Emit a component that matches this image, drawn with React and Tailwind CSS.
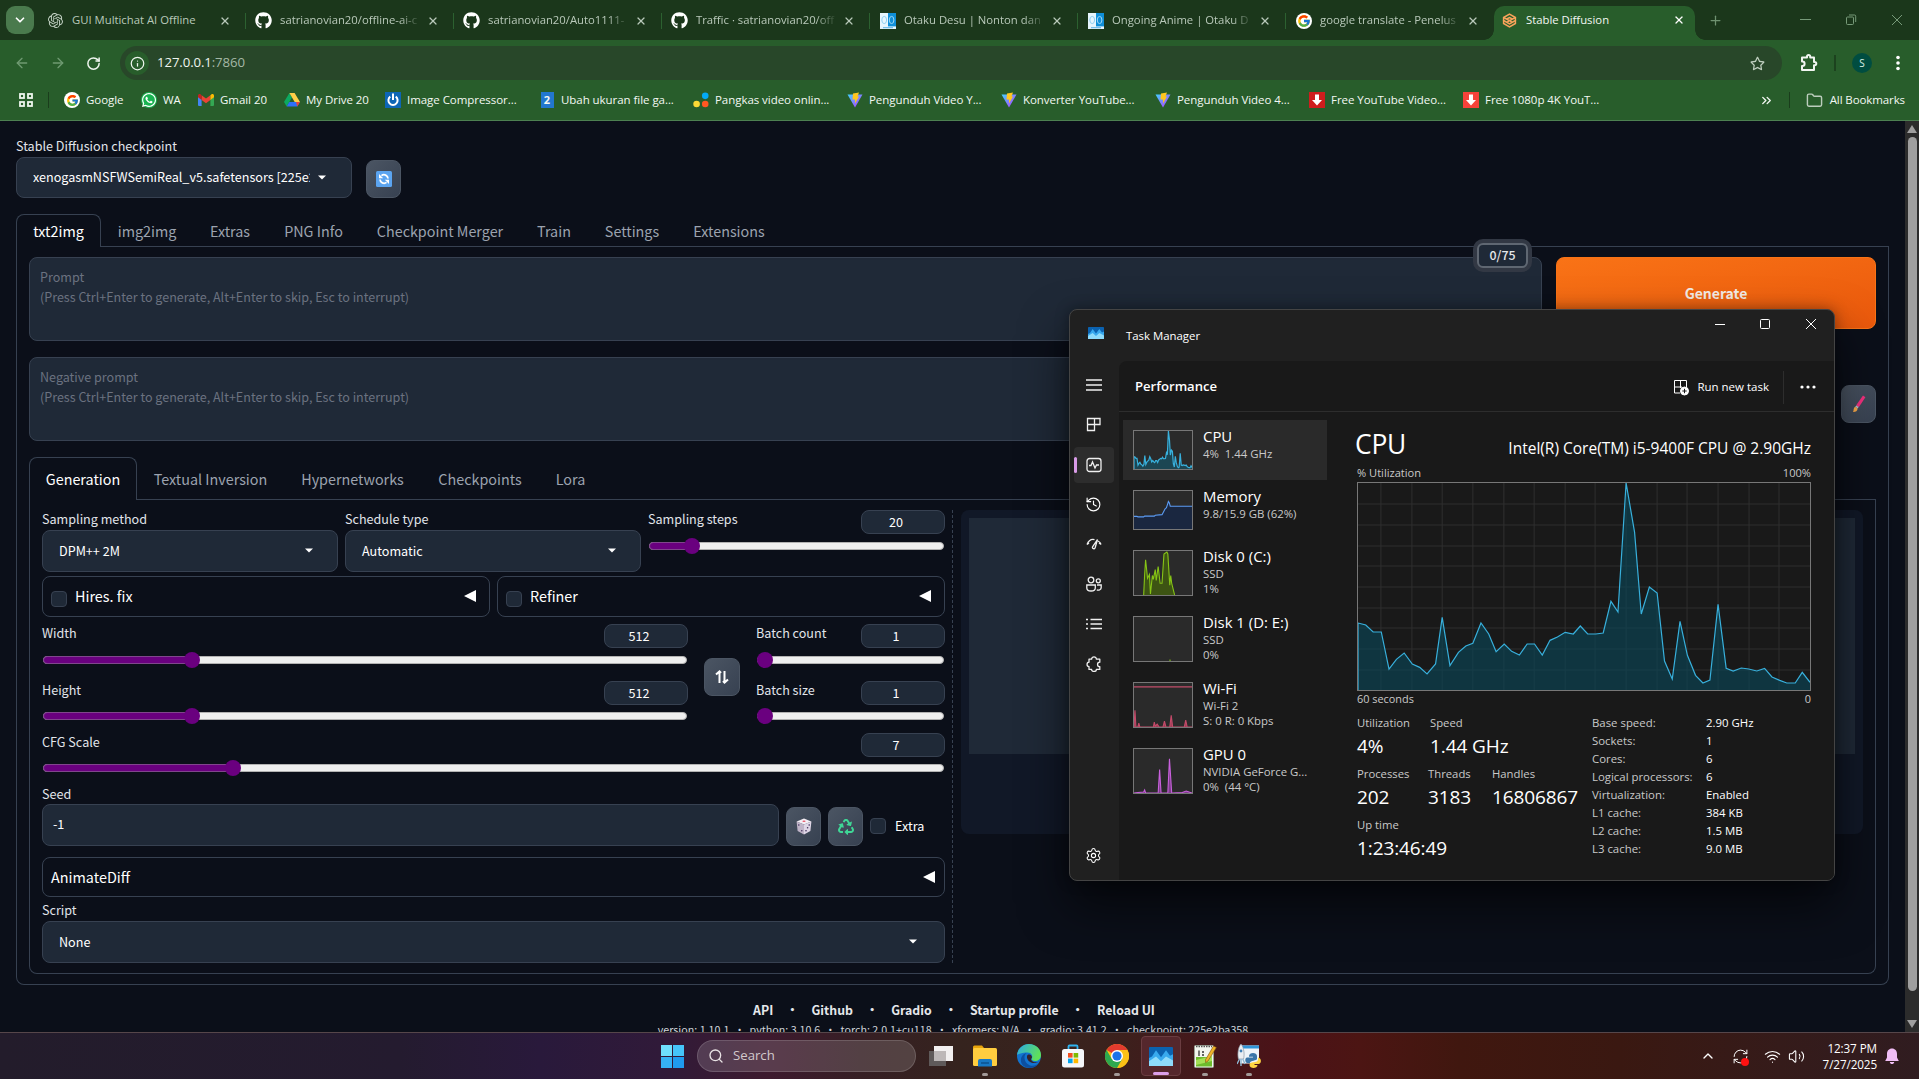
import React from "react";
import { FaGithub, FaRecycle, FaWhatsapp, FaRegStar } from "react-icons/fa";
import { FcGoogle } from "react-icons/fc";
import { SiOpenai } from "react-icons/si";
import {
  ChevronDown, ChevronUp, ChevronsRight, X, Plus, ArrowLeft, ArrowRight, RotateCw, Info,
  Folder, Search, Wifi, Volume2, Settings, History, RefreshCw,
} from "lucide-react";

/* ---------- small drawings ---------- */

const ViteBolt = () => (
  <svg width="16" height="16" viewBox="0 0 16 16">
    <defs>
      <linearGradient id="vb" x1="0" y1="0" x2="1" y2="1">
        <stop offset="0" stopColor="#41d1ff" />
        <stop offset="1" stopColor="#bd34fe" />
      </linearGradient>
    </defs>
    <path d="M0.5 2.5 L15.5 2.5 L8 15.5 Z" fill="url(#vb)" />
    <path d="M6 1.5 L12 0.5 L10.5 4.5 L12 4.5 L8 11.5 L8 7.5 L5.5 7.5 Z" fill="#ffc61f" />
  </svg>
);

const GmailIcon = () => (
  <svg width="16" height="12" viewBox="0 0 16 12">
    <path d="M0 1.5 V11 a1 1 0 0 0 1 1 H3.6 V5 Z" fill="#4285f4" />
    <path d="M16 1.5 V11 a1 1 0 0 1 -1 1 H12.4 V5 Z" fill="#34a853" />
    <path d="M3.6 1.2 L8 4.6 L12.4 1.2 V6 L8 9.3 L3.6 6 Z" fill="#ea4335" />
    <path d="M0 1.6 C0 .2 1.6 -.4 2.7 .5 L3.6 1.2 V6 L0 3.3 Z" fill="#c5221f" />
    <path d="M16 1.6 C16 .2 14.4 -.4 13.3 .5 L12.4 1.2 V6 L16 3.3 Z" fill="#fbbc04" />
  </svg>
);

const DriveIcon = () => (
  <svg width="16" height="14" viewBox="0 0 16 14">
    <path d="M5.4 0 L8 4.5 L2.7 13.6 L0 9 Z" fill="#0da960" />
    <path d="M5.4 0 H10.6 L16 9 H10.7 Z" fill="#ffcf48" />
    <path d="M5.3 9 H16 L13.3 13.6 H2.7 Z" fill="#2d6ff7" />
    <path d="M12 9 H16 L13.3 13.6 Z" fill="#ea4335" />
  </svg>
);

const OtakuIcon = () => (
  <svg width="16" height="16" viewBox="0 0 16 16">
    <rect width="8" height="16" fill="#e6f5fd" />
    <rect x="8" width="8" height="16" fill="#0f8fd8" />
    <ellipse cx="4.2" cy="7" rx="2.4" ry="3.6" fill="none" stroke="#8fd0f1" />
    <ellipse cx="11.6" cy="7" rx="2.3" ry="3.6" fill="none" stroke="#9fd8f6" />
    <rect y="13.4" width="16" height="2.6" fill="#e5f4fc" />
    <path d="M3 14.7 H13" stroke="#5ab2e4" />
  </svg>
);

const GradioIcon = () => (
  <svg width="15" height="15" viewBox="0 0 16 16" fill="none" stroke="#f9a35b" strokeWidth="1.6">
    <path d="M8 1.2 L14.3 4.8 V8 L8 11.6 L1.7 8 V4.8 Z" />
    <path d="M1.7 4.8 L8 8.2 L14.3 4.8 M1.7 8 V11.2 L8 14.8 L14.3 11.2 V8 M5 6.4 L8 4.8 L11 6.4 M5 10 L8 8.2 L11 10" />
  </svg>
);

const ExtensionIcon = () => (
  <svg width="20" height="20" viewBox="0 0 20 20" fill="none" stroke="#f1f6f1" strokeWidth="2" strokeLinejoin="round">
    <path d="M3 4.5 H8 V3.6 a1.6 1.6 0 0 1 3.2 0 V4.5 H15 V9 h.7 a1.6 1.6 0 0 1 0 3.2 H15 V17 H3 V13 h.4 a2.2 2.2 0 0 0 0 -4.4 H3 Z" />
  </svg>
);

const DownloadTile = ({ light }) => (
  <svg width="16" height="16" viewBox="0 0 16 16">
    <rect width="16" height="16" fill={light ? "#f6423a" : "#cf1d1d"} />
    <path d="M6 2.5 H10 V8 H13 L8 13.5 L3 8 H6 Z" fill="#fff" />
  </svg>
);

const PowerTile = () => (
  <svg width="16" height="16" viewBox="0 0 16 16">
    <rect width="16" height="16" fill="#0d66b5" />
    <path d="M5.3 4.6 a4.6 4.6 0 1 0 5.4 0" fill="none" stroke="#fff" strokeWidth="2" />
    <path d="M8 1.5 V8" stroke="#fff" strokeWidth="2" />
  </svg>
);

const DotsIcon = () => (
  <svg width="17" height="16" viewBox="0 0 17 16">
    <circle cx="13" cy="3.6" r="3.5" fill="#03a9f4" />
    <circle cx="3.8" cy="12.3" r="3.5" fill="#fdd835" />
    <circle cx="13" cy="12.3" r="3.5" fill="#ff5722" />
  </svg>
);

const RefreshEmoji = () => (
  <svg width="16" height="16" viewBox="0 0 16 16">
    <rect width="16" height="16" rx="1.5" fill="#5ba4f0" />
    <path d="M4 8.5 a4 4 0 0 0 6.5 2.9 M12 7.5 a4 4 0 0 0 -6.5 -2.9" fill="none" stroke="#fff" strokeWidth="1.8" />
    <path d="M3 3 V7.3 H7.2 Z M13 13 V8.7 H8.8 Z" fill="#fff" />
  </svg>
);

const DiceEmoji = () => (
  <svg width="16" height="17" viewBox="0 0 16 17">
    <path d="M8 .5 L15.4 3.4 L8 6.4 L.6 3.4 Z" fill="#f4eef5" />
    <path d="M.6 3.4 L8 6.4 V16.5 L1.6 13 Z" fill="#c0b4c8" />
    <path d="M15.4 3.4 L8 6.4 V16.5 L14.4 13 Z" fill="#dfd6e6" />
    <ellipse cx="8" cy="3.2" rx="1.6" ry=".8" fill="#e8566a" />
    <g fill="#40305a">
      <circle cx="2.8" cy="7" r=".8" /><circle cx="5.8" cy="12.8" r=".8" />
      <circle cx="13.2" cy="7" r=".8" /><circle cx="11.6" cy="9.8" r=".8" /><circle cx="10" cy="12.8" r=".8" />
    </g>
  </svg>
);

const BrushEmoji = () => (
  <svg width="14" height="18" viewBox="0 0 14 18">
    <path d="M11 .6 L13.4 2.2 L6.8 12.2 L4.2 10.3 Z" fill="#f5317f" />
    <path d="M4.4 10.4 L6.6 12 L5.6 13.4 L3.2 11.8 Z" fill="#b9c3cf" />
    <path d="M3.2 11.8 L5.6 13.4 C5.6 15.8 3.4 17.2 1 17 C2 16 1 13.2 3.2 11.8 Z" fill="#fbab4a" />
  </svg>
);

const TaskManagerIcon = ({ className }) => (
  <svg className={className} viewBox="0 0 24 24" preserveAspectRatio="none">
    <rect width="24" height="24" rx="1" fill="#0b62b0" />
    <path d="M0 14 L3 12 L7 4 L12 13 L17 4 L21 11 L24 9 V24 H0 Z" fill="#38a9ee" />
    <path d="M0 18 L7 12 L12 18 L17 12 L24 17 V24 H0 Z" fill="#8edbfb" />
  </svg>
);

/* ---------- browser chrome ---------- */

const browserTabs = [
  { title: "GUI Multichat AI Offline", icon: <SiOpenai size={15} color="#c4d2c5" /> },
  { title: "satrianovian20/offline-ai-c", icon: <FaGithub size={17} color="#fff" /> },
  { title: "satrianovian20/Auto1111-", icon: <FaGithub size={17} color="#fff" /> },
  { title: "Traffic · satrianovian20/off", icon: <FaGithub size={17} color="#fff" /> },
  { title: "Otaku Desu | Nonton dan", icon: <OtakuIcon /> },
  { title: "Ongoing Anime | Otaku D", icon: <OtakuIcon /> },
  { title: "google translate - Penelus", icon: <span className="flex h-4 w-4 items-center justify-center rounded-full bg-white"><FcGoogle size={14} /></span> },
];

const TabStrip = () => (
  <div className="flex h-10 bg-[#1b371b] pl-[6px] text-[11.3px] text-[#b9c9ba]">
    <div className="mt-[6px] flex h-7 w-7 items-center justify-center rounded-[9px] bg-[#4a7a4d]">
      <ChevronDown size={14} strokeWidth={3} color="#fff" />
    </div>
    <div className="ml-[4px] flex">
      {browserTabs.map((t, i) => (
        <div key={i} className="flex h-10 w-[208px] items-center pt-px">
          <span className="ml-[9px] flex w-[17px] justify-center">{t.icon}</span>
          <span className={i === 0 ? "ml-[8px] w-[141px] whitespace-nowrap" : "ml-[8px] w-[141px] whitespace-nowrap [mask-image:linear-gradient(to_right,black_120px,transparent_141px)]"}>{t.title}</span>
          <X size={12} strokeWidth={2.4} className="ml-[6px]" />
          <span className={i < 6 ? "ml-[14px] h-4 w-px bg-[#2c6130]" : "ml-[14px] h-4 w-px"} />
        </div>
      ))}
    </div>
    <div className="relative mt-[6px] flex h-[34px] w-[201px] items-center rounded-t-[10px] bg-[#285d2b] text-[#f2f7f2]">
      <span className="absolute bottom-0 -left-[10px] h-[10px] w-[10px] bg-[radial-gradient(circle_at_top_left,transparent_9.5px,#285d2b_10px)]" />
      <span className="absolute -right-[10px] bottom-0 h-[10px] w-[10px] bg-[radial-gradient(circle_at_top_right,transparent_9.5px,#285d2b_10px)]" />
      <span className="-mt-[5px] ml-[8px]"><GradioIcon /></span>
      <span className="-mt-[5px] ml-[9px] w-[147px]">Stable Diffusion</span>
      <X size={12} strokeWidth={2.6} className="-mt-[6px]" color="#fff" />
    </div>
    <Plus size={15} className="mt-[13px] ml-[13px]" color="#6f9271" />
    <div className="mr-[5px] ml-auto flex items-center text-[#779a79]">
      <svg width="114" height="12" viewBox="0 0 114 12" fill="none" stroke="currentColor">
        <path d="M0 5.5 H11" />
        <rect x="46.5" y="3" width="7" height="7.5" rx="1" />
        <path d="M49 1 H54.5 a1.2 1.2 0 0 1 1.2 1.2 V8" />
        <path d="M92 1 L102 11 M102 1 L92 11" />
      </svg>
    </div>
  </div>
);

const Toolbar = () => (
  <div className="flex h-[46px] items-center bg-[#285d2b] text-[#eef5ee]">
    <ArrowLeft size={16} className="ml-[14px]" color="#6f9a72" />
    <ArrowRight size={16} className="ml-[20px]" color="#6f9a72" />
    <RotateCw size={15} strokeWidth={2.4} className="ml-[20px]" />
    <div className="ml-[19px] flex h-[34px] w-[1662px] items-center rounded-full bg-[#284729]">
      <span className="ml-[5px] flex h-6 w-6 items-center justify-center rounded-full bg-[#285d2b]"><Info size={15} /></span>
      <span className="ml-[8px] text-[13.2px] tracking-[-0.1px]">127.0.0.1<span className="text-[#a5b8a6]">:7860</span></span>
      <FaRegStar size={15} className="mr-[17px] ml-auto" color="#bfcfbf" />
    </div>
    <span className="ml-[17px]"><ExtensionIcon /></span>
    <span className="ml-[15px] h-4 w-[2px] bg-[#1c421e]" />
    <span className="ml-[16px] flex h-5 w-5 items-center justify-center rounded-full bg-[#004d40] text-[10px] text-[#d8f0e6]">S</span>
    <svg width="4" height="16" className="ml-[24px]" fill="#fff"><circle cx="2" cy="2.5" r="1.8" /><circle cx="2" cy="8" r="1.8" /><circle cx="2" cy="13.5" r="1.8" /></svg>
  </div>
);

const bookmarks = [
  { w: "w-[77px]", label: "Google", icon: <span className="flex h-4 w-4 items-center justify-center rounded-full bg-white"><FcGoogle size={13} /></span> },
  { w: "w-[57px]", label: "WA", icon: <span className="flex h-4 w-4 items-center justify-center rounded-full bg-[#19b351]"><FaWhatsapp size={16} color="#fff" /></span> },
  { w: "w-[86px]", label: "Gmail 20", icon: <GmailIcon /> },
  { w: "w-[101px]", label: "My Drive 20", icon: <DriveIcon /> },
  { w: "w-[154px]", label: "Image Compressor...", icon: <PowerTile /> },
  { w: "w-[154px]", label: "Ubah ukuran file ga...", icon: <span className="flex h-4 w-[13px] items-center justify-center bg-[#2277cf] text-[11px] font-bold">2</span> },
  { w: "w-[154px]", label: "Pangkas video onlin...", icon: <DotsIcon /> },
  { w: "w-[154px]", label: "Pengunduh Video Y...", icon: <ViteBolt /> },
  { w: "w-[154px]", label: "Konverter YouTube...", icon: <ViteBolt /> },
  { w: "w-[154px]", label: "Pengunduh Video 4...", icon: <ViteBolt /> },
  { w: "w-[154px]", label: "Free YouTube Video...", icon: <DownloadTile /> },
  { w: "w-[154px]", label: "Free 1080p 4K YouT...", icon: <DownloadTile light /> },
];

const Bookmarks = () => (
  <div className="flex h-[35px] items-center border-b border-[#4d8051] bg-[#285d2b] pb-[6px] text-[11.5px] text-[#f3f8f3]">
    <svg width="14" height="14" className="ml-[19px]" fill="none" stroke="#eef5ee" strokeWidth="1.8">
      <rect x="1" y="1" width="4" height="4" /><rect x="9" y="1" width="4" height="4" />
      <rect x="1" y="9" width="4" height="4" /><rect x="9" y="9" width="4" height="4" />
    </svg>
    <span className="ml-[15px] h-4 w-px bg-[#1a3d1c]" />
    <div className="ml-[15px] flex">
      {bookmarks.map((b) => (
        <div key={b.label} className={"flex shrink-0 items-center " + b.w}>
          <span className="flex w-4 shrink-0 justify-center">{b.icon}</span>
          <span className="ml-[6px] whitespace-nowrap tracking-[-0.05px]">{b.label}</span>
        </div>
      ))}
    </div>
    <div className="mr-[14px] ml-auto flex items-center">
      <ChevronsRight size={15} strokeWidth={2.2} />
      <span className="ml-[15px] h-4 w-px bg-[#1a3d1c]" />
      <Folder size={17} className="ml-[16px]" color="#bccdbd" />
      <span className="ml-[7px] tracking-[-0.1px]">All Bookmarks</span>
    </div>
  </div>
);

/* ---------- web UI ---------- */

const Label = ({ children }) => (
  <div className="text-[12.6px] leading-[18px] whitespace-nowrap text-[#e1e4ea]">{children}</div>
);

const Caret = () => (
  <svg width="8" height="5" viewBox="0 0 8 5"><path d="M0 .5 H8 L4 4.5 Z" fill="#fff" /></svg>
);

const Select = ({ value, className }) => (
  <div className={"flex items-center justify-between rounded-lg border border-[#374151] bg-[#1f2937] pb-px pl-4 " + className}>
    <span className="text-[12.6px] leading-5 text-white">{value}</span>
    <Caret />
  </div>
);

const NumberBox = ({ value }) => (
  <div className="flex h-6 w-[84px] items-center justify-center rounded-lg border border-[#374151] bg-[#1f2937] pr-[14px] text-[12.6px] leading-5 text-white">{value}</div>
);

const Slider = ({ fill, knob }) => (
  <div className="relative h-2 rounded-full border border-[#b2b2b2] bg-[#efefef]">
    <div className={"-mt-px -ml-px h-2 rounded-full border border-[#80468c] bg-[#6a007f] " + fill} />
    <span className={"absolute -top-[5px] h-4 w-4 rounded-full bg-[#6a007f] " + knob} />
  </div>
);

const SliderField = ({ label, value, fill, knob, gap }) => (
  <div>
    <div className="flex h-6 justify-between">
      <Label>{label}</Label>
      <NumberBox value={value} />
    </div>
    <div className={"px-px " + gap}><Slider fill={fill} knob={knob} /></div>
  </div>
);

const CheckBox = () => <span className="h-4 w-4 rounded border border-[#374151] bg-[#1f2937]" />;

const Triangle = () => (
  <svg width="12" height="12" viewBox="0 0 12 12"><path d="M0 6 L12 0 V12 Z" fill="#fff" /></svg>
);

const Accordion = ({ label, check }) => (
  <div className={check ? "flex h-[41px] w-[448px] items-center rounded-lg border border-[#374151] px-2 pb-px" : "flex h-10 items-center rounded-lg border border-[#374151] px-2"}>
    {check && <span className="mt-[5px] mr-2 flex"><CheckBox /></span>}
    <span className="text-[14.4px] leading-6 text-white">{label}</span>
    <span className={check ? "mr-[5px] ml-auto" : "mr-px ml-auto"}><Triangle /></span>
  </div>
);

const ToolButton = ({ children, className }) => (
  <div className={"flex items-center justify-center rounded-lg border border-[#4b5563] bg-linear-to-br from-[#4b5563] to-[#374151] " + className}>{children}</div>
);

const Tabs = ({ items, className, first }) => (
  <div className={"flex text-[14.35px] text-[#9ca3af] " + className}>
    <div className={"flex items-center justify-center rounded-t-lg border border-b-0 border-[#374151] text-white " + first}>{items[0].label}</div>
    <div className="flex flex-1 border-b border-[#374151] pt-[2px]">
      {items.slice(1).map((t) => (
        <div key={t.label} className={"flex items-center justify-center whitespace-nowrap " + t.w}>{t.label}</div>
      ))}
    </div>
  </div>
);

const mainTabs = [
  { label: "txt2img" }, { label: "img2img", w: "w-[92px]" }, { label: "Extras", w: "w-[74px]" },
  { label: "PNG Info", w: "w-[93px]" }, { label: "Checkpoint Merger", w: "w-[160px]" }, { label: "Train", w: "w-[68px]" },
  { label: "Settings", w: "w-[88px]" }, { label: "Extensions", w: "w-[106px]" },
];
const subTabs = [
  { label: "Generation" }, { label: "Textual Inversion", w: "w-[147px]" }, { label: "Hypernetworks", w: "w-[137px]" },
  { label: "Checkpoints", w: "w-[118px]" }, { label: "Lora", w: "w-[63px]" },
];

const PromptBox = ({ title }) => (
  <div className="h-[84px] w-[1513px] rounded-lg border border-[#374151] bg-[#1f2937] px-[10px] pt-[9px] text-[12.55px] leading-5 text-[#6b7280]">
    {title}<br />(Press Ctrl+Enter to generate, Alt+Enter to skip, Esc to interrupt)
  </div>
);

const Prompts = () => (
  <div className="flex">
    <div className="relative flex flex-col gap-4">
      <PromptBox title="Prompt" />
      <PromptBox title="Negative prompt" />
      <div className="absolute -top-[18px] right-[10px] rounded-[10px] bg-[#323844] p-1">
        <div className="flex h-[25px] w-[51px] items-center justify-center rounded-md border-2 border-[#5f6772] bg-[#1f2937] text-[12.4px] font-medium text-[#e5e7eb]">0/75</div>
      </div>
    </div>
    <div className="ml-[14px] flex w-[320px] flex-col items-end">
      <div className="flex h-[72px] w-full items-center justify-center rounded-lg border border-[#f97316] bg-linear-to-br from-[#f97316] to-[#ea580c] text-[14px] font-bold text-[#f3ece6]">Generate</div>
      <ToolButton className="mt-[56px] h-[38px] w-[35px]"><BrushEmoji /></ToolButton>
    </div>
  </div>
);

const Generation = () => (
  <div className="w-[903px]">
    <div className="flex h-[62px] gap-[7px]">
      <div className="w-[296px]"><Label>Sampling method</Label><Select value="DPM++ 2M" className="mt-[2px] h-[42px] pr-6" /></div>
      <div className="w-[296px]"><Label>Schedule type</Label><Select value="Automatic" className="mt-[2px] h-[42px] pr-6" /></div>
      <div className="w-[297px]"><SliderField label="Sampling steps" value="20" gap="mt-2" fill="w-[44px]" knob="left-[34px]" /></div>
    </div>
    <div className="mt-1 flex gap-[7px]">
      <Accordion label="Hires. fix" check />
      <Accordion label="Refiner" check />
    </div>
    <div className="mt-[7px] flex">
      <div className="flex w-[646px] flex-col gap-[17px]">
        <SliderField label="Width" value="512" gap="mt-2" fill="w-[150px]" knob="left-[140px]" />
        <SliderField label="Height" value="512" gap="mt-[7px]" fill="w-[150px]" knob="left-[140px]" />
      </div>
      <ToolButton className="mt-[34px] ml-[16px] h-[38px] w-9">
        <svg width="14" height="14" viewBox="0 0 14 14" fill="none" stroke="#fff" strokeWidth="2"><path d="M4.5 13 V2 M1 4.6 L4.5 1.4 L6 3 M9.5 1 V12 M13 9.4 L9.5 12.6 L8 11" /></svg>
      </ToolButton>
      <div className="ml-[16px] flex w-[189px] flex-col gap-[17px]">
        <SliderField label="Batch count" value="1" gap="mt-2" fill="w-[8px]" knob="-left-px" />
        <SliderField label="Batch size" value="1" gap="mt-[7px]" fill="w-[8px]" knob="-left-px" />
      </div>
    </div>
    <div className="mt-[13px]"><SliderField label="CFG Scale" value="7" gap="mt-[7px]" fill="w-[190px]" knob="left-[181px]" /></div>
    <div className="mt-[13px] pb-px"><Label>Seed</Label></div>
    <div className="flex h-[42px] items-end">
      <div className="flex h-[42px] w-[737px] items-center rounded-lg border border-[#374151] bg-[#1f2937] px-[10px] pb-[2px] text-[12.6px] leading-5 text-white">-1</div>
      <ToolButton className="ml-[7px] h-[39px] w-[35px]"><DiceEmoji /></ToolButton>
      <ToolButton className="ml-[7px] h-[39px] w-[35px]"><FaRecycle size={16} color="#3fd796" /></ToolButton>
      <span className="mb-3 ml-[7px] flex"><CheckBox /></span>
      <span className="mb-[10px] ml-[9px] text-[12.6px] leading-5 text-white">Extra</span>
    </div>
    <div className="mt-[11px]"><Accordion label="AnimateDiff" /></div>
    <div className="mt-[4px]"><Label>Script</Label></div>
    <Select value="None" className="mt-[2px] h-[42px] pr-[27px]" />
  </div>
);

const footerLinks = ["API", "Github", "Gradio", "Startup profile", "Reload UI"];

const WebUI = () => (
  <div className="flex h-[911px] bg-[#0b0f19] font-['Noto_Sans_CJK_SC','Noto_Sans',sans-serif]">
    <div className="w-[1905px] overflow-hidden pt-[15px] pr-[15px] pl-4">
      <div className="h-5 pt-px"><Label>Stable Diffusion checkpoint</Label></div>
      <div className="mt-px flex items-end">
        <div className="flex h-[41px] w-[336px] items-center rounded-lg border border-[#374151] bg-[#1f2937] pb-px pl-4">
          <span className="w-[277px] overflow-hidden text-[12.6px] leading-5 whitespace-nowrap text-white">xenogasmNSFWSemiReal_v5.safetensors [225e2</span>
          <span className="ml-[8px]"><Caret /></span>
        </div>
        <ToolButton className="ml-[14px] h-[38px] w-[35px]"><RefreshEmoji /></ToolButton>
      </div>
      <Tabs items={mainTabs} className="mt-4 h-[33px] w-[1873px]" first="w-[85px]" />
      <div className="h-[738px] w-[1873px] rounded-b-lg border border-t-0 border-[#374151] pt-[10px] pl-3">
        <Prompts />
        <Tabs items={subTabs} className="mt-4 h-[43px] w-[1847px]" first="w-[108px]" />
        <div className="flex h-[474px] w-[1847px] rounded-b-lg border border-t-0 border-[#374151] pt-[10px] pl-3">
          <Generation />
          <div className="ml-[7px] h-[453px] border-l border-dashed border-[#374151]" />
          <div className="ml-2 h-[324px] w-[902px] rounded-lg bg-[#111827] p-2">
            <div className="h-[236px] bg-[#1f2937]" />
          </div>
        </div>
      </div>
      <div className="mt-[15px] flex h-5 items-center justify-center pl-[2px] text-[12.3px] font-bold text-[#e5e7eb]">
        {footerLinks.map((l, i) => (
          <React.Fragment key={l}>
            {i > 0 && <span className="mx-[13px]">•</span>}
            <span>{l}</span>
          </React.Fragment>
        ))}
      </div>
      <div className="flex h-5 items-center justify-center text-[10.7px] whitespace-pre text-[#d1d5db]">
        version: <u>1.10.1</u>  •  python: 3.10.6  •  torch: 2.0.1+cu118  •  xformers: N/A  •  gradio: 3.41.2  •  checkpoint: <u>225e2ba358</u>
      </div>
    </div>
    <div className="flex w-[14px] flex-col items-center justify-between bg-[#2c2c2c] py-[4px]">
      <svg width="10" height="8" viewBox="0 0 10 8"><path d="M5 0 L10 8 H0 Z" fill="#9f9f9f" /></svg>
      <div className="mb-[25px] h-[854px] w-[9px] rounded-full bg-[#9f9f9f]" />
      <svg width="10" height="8" viewBox="0 0 10 8"><path d="M5 8 L10 0 H0 Z" fill="#9f9f9f" /></svg>
    </div>
  </div>
);

/* ---------- task manager ---------- */

const cpuLine = "0,420 21,426 41,447 63,447 84,558 104,529 125,510 147,543 167,553 187,573 210,543 228,403 249,548 272,508 292,489 311,481 333,420 354,453 374,506 396,483 416,505 437,516 458,483 478,483 499,516 520,472 540,462 561,448 583,453 602,429 622,453 644,453 664,450 685,355 704,387 726,0 749,148 767,393 789,312 810,330 830,534 851,588 872,415 892,517 914,577 934,600 953,591 975,364 997,556 1016,564 1038,555 1058,558 1080,564 1101,556 1121,582 1142,592 1161,600 1184,600 1203,568 1224,598";
const gridX = [62, 146, 228, 311, 395, 477, 561, 642, 726, 810, 891, 975, 1059, 1140];
const gridY = [63, 126, 189, 249, 312, 375, 435, 498, 561];

const CpuPlot = ({ grid }) => (
  <svg className="block h-full w-full" viewBox="0 0 1224 621" preserveAspectRatio="none">
    {grid && (
      <g stroke="#2f2f2f">
        {gridX.map((x) => <path key={x} d={`M${x} 0 V621`} vectorEffect="non-scaling-stroke" />)}
        {gridY.map((y) => <path key={y} d={`M0 ${y} H1224`} vectorEffect="non-scaling-stroke" />)}
      </g>
    )}
    <polygon points={`0,621 ${cpuLine} 1224,621`} fill={grid ? "rgba(8,72,90,.6)" : "rgba(20,90,112,.6)"} />
    <polyline points={`0,621 ${cpuLine}`} fill="none" stroke="#38b0dc" strokeWidth="1.2" vectorEffect="non-scaling-stroke" />
  </svg>
);

const MiniPlot = ({ line, stroke, fill, children }) => (
  <svg className="block h-full w-full" viewBox="0 0 60 45" preserveAspectRatio="none">
    {line && <polygon points={`0,46 ${line} 60,46`} fill={fill} />}
    {line && <polyline points={line} fill="none" stroke={stroke} strokeWidth="1.1" vectorEffect="non-scaling-stroke" />}
    {children}
  </svg>
);

const resources = [
  { name: "CPU", lines: ["4%  1.44 GHz"], box: "h-10", item: "h-[60px] bg-[#2a2a2a]", plot: <CpuPlot /> },
  { name: "Memory", lines: ["9.8/15.9 GB (62%)"], box: "h-10", item: "h-[60px]",
    plot: <MiniPlot line="0,30 3,30 4,30.6 10,30.6 11,29.8 21,29.8 22,28.8 29,28 32.5,20.5 33.5,20 35.6,12.5 36.5,14 37.5,18 60,18" stroke="#5b9cf5" fill="#1a2740" /> },
  { name: "Disk 0 (C:)", lines: ["SSD", "1%"], box: "h-[46px]", item: "h-[66px]",
    plot: <MiniPlot line="10,45 11,24 12,9 14,28 16,24 17,44 19,25 20,29 22,19 23,30 25,16 27,33 29,33 31,3 34,1 35,3 37,35 38,25 39,33 42,45" stroke="#86c416" fill="#3d5413" /> },
  { name: "Disk 1 (D: E:)", lines: ["SSD", "0%"], box: "h-[46px]", item: "h-[66px]",
    plot: <MiniPlot><rect x="36.5" y="43.5" width="1.5" height="1.5" fill="#6f9f1c" /></MiniPlot> },
  { name: "Wi-Fi", lines: ["Wi-Fi 2", "S: 0 R: 0 Kbps"], box: "h-[46px]", item: "h-[66px]",
    plot: <MiniPlot line="0,45 1,28 2,45 4,45 5,41 6,45 20,45 21,40 22,44 24,42 26,45 30,45 31.5,39 33,45 37,45 38.5,33 40,45 52,45 53.5,38 55,45 60,45" stroke="#c44a69" fill="#a03f58"><path d="M0 4 H60" stroke="#f0587c" /></MiniPlot> },
  { name: "GPU 0", lines: ["NVIDIA GeForce G...", "0%  (44 °C)"], box: "h-[46px]", item: "h-[66px]",
    plot: <MiniPlot line="0,45 4,44.5 10,44 11,42 12,45 25,45 26.5,21 28,45 35,45 36.7,10 39,45 50,44.5 54,43 60,45" stroke="#c860dc" fill="#7d3f8a" /> },
];

const navStroke = { fill: "none", stroke: "#f0f0f0", strokeWidth: 1.3 };
const NavIcon = ({ children }) => <svg width="16" height="16" viewBox="0 0 16 16" {...navStroke}>{children}</svg>;

const Stat = ({ label, value, className }) => (
  <div className={className}>
    <div className="text-[11.3px] leading-[18px] text-[#c9c9c9]">{label}</div>
    <div className="text-[19px] leading-7 tracking-[-0.1px] whitespace-nowrap text-white">{value}</div>
  </div>
);

const specs = [
  ["Base speed:", "2.90 GHz"], ["Sockets:", "1"], ["Cores:", "6"], ["Logical processors:", "6"],
  ["Virtualization:", "Enabled"], ["L1 cache:", "384 KB"], ["L2 cache:", "1.5 MB"], ["L3 cache:", "9.0 MB"],
];

const TaskManager = () => (
  <div className="absolute top-[309px] left-[1069px] flex h-[572px] w-[766px] flex-col overflow-hidden rounded-lg border border-[#444] bg-[#202020] text-white shadow-[0_24px_48px_rgba(0,0,0,0.6),0_0_14px_rgba(0,0,0,0.35)]">
    <div className="flex h-[51px]">
      <TaskManagerIcon className="mt-[17px] ml-[18px] h-3 w-4" />
      <span className="mt-[17px] ml-[22px] text-[11.4px] leading-[18px]">Task Manager</span>
      <svg width="102" height="12" viewBox="0 0 102 12" className="mt-[8px] mr-[17px] ml-auto" fill="none" stroke="#fff">
        <path d="M0 6.5 H10" /><rect x="45.5" y="1.5" width="9" height="9" rx="1" /><path d="M91 1 L101 11 M101 1 L91 11" />
      </svg>
    </div>
    <div className="flex flex-1">
      <div className="flex w-[49px] flex-col items-center pr-[2px]">
        <div className="mt-[6px] flex h-9 items-center"><NavIcon><path d="M0 3 H16 M0 8 H16 M0 13 H16" /></NavIcon></div>
        <div className="mt-[3px] flex h-9 items-center"><NavIcon><path d="M1.5 2.5 H14 V8.5 H1.5 Z M1.5 8.5 V14.5 H8.5 V2.5" /></NavIcon></div>
        <div className="mt-[5px] flex h-9 w-10 items-center rounded bg-[#2d2d2d]">
          <span className="h-4 w-[3px] rounded-full bg-[#d99be8]" />
          <span className="ml-[9px]"><NavIcon><rect x="1" y="1.5" width="14" height="13" rx="2.5" /><path d="M3 8.5 H5 L6.5 5 L9 11 L10.5 8 H13" /></NavIcon></span>
        </div>
        <div className="mt-[3px] flex h-9 items-center"><History size={17} strokeWidth={1.6} /></div>
        <div className="mt-1 flex h-9 items-center"><NavIcon><path d="M1 8.5 C3 3.5 6 3 8.5 3.6 M12 5 C14 6 14.8 7.5 15 8.5 M1 8.5 L3 7 M15 8.5 L13 7 M11.5 3.5 L9.2 11.5 A1.4 1.4 0 1 1 7 10.2 Z" /></NavIcon></div>
        <div className="mt-1 flex h-9 items-center"><NavIcon><circle cx="5" cy="4" r="2.8" /><circle cx="12.3" cy="4.8" r="2" /><path d="M.8 9 H9.3 V12 C9.3 16 .8 16 .8 12 Z M11 9 H15.2 V11.5 C15.2 13.5 13 14.6 10.8 14" /></NavIcon></div>
        <div className="mt-1 flex h-9 items-center"><NavIcon><path d="M4.5 3.5 H16 M4.5 8 H16 M4.5 12.5 H16 M0 3.5 H2 M0 8 H2 M0 12.5 H2" /></NavIcon></div>
        <div className="mt-1 flex h-9 items-center"><NavIcon><path d="M3 3.2 H5.6 C5.6 .2 10.4 .2 10.4 3.2 H13.8 V6.2 C10.8 6.2 10.8 10.6 13.8 10.6 V13.4 H10.4 C10.4 16.2 5.6 16.2 5.6 13.4 H3 V10.6 C.4 10.4 .4 6.4 3 6.2 Z" strokeLinejoin="round" /></NavIcon></div>
        <div className="mt-auto mb-[16px]"><Settings size={17} strokeWidth={1.5} /></div>
      </div>
      <div className="flex flex-1 flex-col rounded-tl-lg bg-[#191919]">
        <div className="flex h-[51px] items-center border-b border-[#2d2d2d] pt-[2px]">
          <span className="ml-4 text-[13.1px] font-semibold">Performance</span>
          <svg width="15" height="17" viewBox="0 0 15 17" fill="none" stroke="#fff" className="ml-auto">
            <path d="M.5 1.5 H12.5 V8 M.5 1.5 V14 H6 M.5 8 H8 M6.5 1.5 V9" /><circle cx="10.5" cy="12" r="4" fill="#fff" /><path d="M8.3 12 H12.7 M10.5 9.8 V14.2" stroke="#191919" />
          </svg>
          <span className="ml-[8px] text-[11.5px]">Run new task</span>
          <span className="ml-[14px] h-[33px] w-px bg-[#2d2d2d]" />
          <svg width="16" height="4" fill="#fff" className="mr-[18px] ml-[16px]"><circle cx="2" cy="2" r="1.6" /><circle cx="8" cy="2" r="1.6" /><circle cx="14" cy="2" r="1.6" /></svg>
        </div>
        <div className="flex flex-1">
          <div className="mt-2 ml-1 w-[204px]">
            {resources.map((r) => (
              <div key={r.name} className={"flex pl-[10px] " + r.item}>
                <div className={"mt-[10px] w-[60px] border border-[#777] bg-[#2a2a2a] " + r.box}>{r.plot}</div>
                <div className="mt-[6px] ml-[10px] whitespace-nowrap">
                  <div className="text-[14.9px] leading-5">{r.name}</div>
                  {r.lines.map((l) => <div key={l} className="text-[11.4px] leading-[15px] whitespace-pre text-[#c9c9c9]">{l}</div>)}
                </div>
              </div>
            ))}
          </div>
          <div className="ml-[30px] w-[454px]">
            <div className="flex h-[52px] items-end justify-between">
              <span className="mb-px -ml-[2px] text-[26.4px] leading-[38px] tracking-[-0.2px]">CPU</span>
              <span className="mb-[4px] text-[15.5px] leading-6">Intel(R) Core(TM) i5-9400F CPU @ 2.90GHz</span>
            </div>
            <div className="flex h-[18px] items-center justify-between text-[11.1px] text-[#c9c9c9]"><span>% Utilization</span><span>100%</span></div>
            <div className="h-[209px] w-[454px] border border-[#777]"><CpuPlot grid /></div>
            <div className="-mt-px flex h-[18px] items-center justify-between text-[10.9px] text-[#c9c9c9]"><span>60 seconds</span><span>0</span></div>
            <div className="mt-[6px] flex">
              <div className="w-[235px]">
                <div className="flex h-[51px]"><Stat label="Utilization" value="4%" className="w-[73px]" /><Stat label="Speed" value="1.44 GHz" /></div>
                <div className="flex h-[51px]"><Stat label="Processes" value="202" className="w-[71px]" /><Stat label="Threads" value="3183" className="w-[64px]" /><Stat label="Handles" value="16806867" /></div>
                <Stat label="Up time" value="1:23:46:49" />
              </div>
              <div className="text-[11.4px] leading-[18px]">
                {specs.map(([k, v]) => <div key={k} className="flex"><span className="w-[114px] text-[#c9c9c9]">{k}</span><span>{v}</span></div>)}
              </div>
            </div>
          </div>
        </div>
      </div>
    </div>
  </div>
);

/* ---------- windows taskbar ---------- */

const FolderApp = () => (
  <svg width="24" height="24" viewBox="0 0 24 24">
    <path d="M0 3 a1.5 1.5 0 0 1 1.5 -1.5 H9 L11 4 V10 H0 Z" fill="#e8a40c" />
    <rect y="4" width="24" height="18" rx="1.5" fill="#ffcd3f" />
    <path d="M5 22.5 V17 a2 2 0 0 1 2 -2 H17 a2 2 0 0 1 2 2 V22.5 Z" fill="#1778c4" />
    <path d="M8 19 H16" stroke="#0b4f8c" strokeWidth="1.4" />
  </svg>
);
const EdgeApp = () => (
  <svg width="24" height="24" viewBox="0 0 24 24">
    <defs>
      <linearGradient id="ed" x1="0" y1="0" x2="1" y2="0.4"><stop offset="0" stopColor="#2aa9e8" /><stop offset="1" stopColor="#5fe05a" /></linearGradient>
    </defs>
    <circle cx="12" cy="12" r="12" fill="#1273cf" />
    <path d="M0 11 C1 4 6 0 12 0 C19 0 24 5 24 11 C24 15 21 17 18 17 C15 17 14 15.5 15 14 C16 12 14.5 8.5 10.5 8.5 C5.5 8.5 1 10 0 11 Z" fill="url(#ed)" />
    <path d="M9.5 9 C6 12 7 19 13 21.5 C17 22.5 20 21 21.5 19.3 C19 25 10 25 6 21.5 C2 17 4 10.5 9.5 9 Z" fill="#0c4fa0" />
    <path d="M10 12 C9.5 16 13 19.5 18.5 19 L22.6 17.6 C20 18.8 15 18.6 14 15.5 C14 14.5 15 14 15 13 C14 10 11 10 10 12 Z" fill="#35232b" />
  </svg>
);
const StoreApp = () => (
  <svg width="24" height="24" viewBox="0 0 24 24">
    <path d="M7.5 6 V2.5 a1 1 0 0 1 1 -1 H15.5 a1 1 0 0 1 1 1 V6" fill="none" stroke="#2fb3f0" strokeWidth="1.8" />
    <rect x="1" y="5" width="22" height="18.5" rx="2.5" fill="#f5f7fa" />
    <rect x="7" y="9" width="4.6" height="4.6" fill="#f25022" /><rect x="12.6" y="9" width="4.6" height="4.6" fill="#7fba00" />
    <rect x="7" y="14.6" width="4.6" height="4.6" fill="#00a4ef" /><rect x="12.6" y="14.6" width="4.6" height="4.6" fill="#ffb900" />
  </svg>
);
const ChromeApp = () => (
  <svg width="24" height="24" viewBox="0 0 24 24">
    <circle cx="12" cy="12" r="12" fill="#fbc116" />
    <path d="M12 12 L1.6 6 A12 12 0 0 1 22.4 6 Z" fill="#e33b2e" />
    <path d="M12 6 H22.4 A12 12 0 0 1 12 24 L17.2 15 Z" fill="#fbc116" />
    <path d="M1.6 6 A12 12 0 0 0 12 24 L17.2 15 L6.8 15 Z" fill="#2da94f" />
    <circle cx="12" cy="12" r="6" fill="#fff" /><circle cx="12" cy="12" r="4.6" fill="#1a73e8" />
  </svg>
);
const NotepadApp = () => (
  <svg width="24" height="24" viewBox="0 0 24 24">
    <rect x="1.5" y="1.5" width="19" height="22" rx="1" fill="#f2f5ee" stroke="#9aa093" />
    <path d="M3 13 H19 V22.5 H3 Z" fill="#6cbb2c" /><path d="M3 16 L19 12 V17 L3 21 Z" fill="#a4df55" />
    <path d="M3 2.5 H19" stroke="#555" strokeWidth="1.6" strokeDasharray="1.5 1" />
    <path d="M6 6.5 V12 M9 8 H11 M9 11 H11" stroke="#333" strokeWidth="1.3" />
    <path d="M20.5 2 L23.4 3.5 L15 17 L12.6 18.6 L12.6 15.6 Z" fill="#f0b429" stroke="#7a4c0b" strokeWidth=".6" />
  </svg>
);
const PythonApp = () => (
  <svg width="24" height="24" viewBox="0 0 24 24">
    <rect x="3" y="1.5" width="19" height="18" fill="#eef4f8" /><rect x="3" y="1.5" width="19" height="3" fill="#3096d8" />
    <path d="M4 0 C7.5 4 7.5 12 6.5 15 H1.5 C.5 12 .5 4 4 0 Z" fill="#eceff2" stroke="#8d99a3" strokeWidth=".7" />
    <circle cx="4" cy="7" r="1.4" fill="#3f81b8" /><path d="M2.5 15 L0 20 M5.8 15 L8 20 M4 15 V22" stroke="#8fb8d4" strokeWidth="1.4" />
    <path d="M12 12 C12 8 20 8 20 12 V15 C20 17 13 16 13 19 H10 C7.5 18 8 14 10 13.6 H16 V12.8 H12 Z" fill="#3a76a8" />
    <path d="M21 13.5 C25 14 24.5 20 21.5 20 H17.5 V21 H20.5 C20.5 25 12.5 25 12.5 21 C12.5 17 20 19.5 21 16 Z" fill="#ffd642" />
  </svg>
);

const TaskbarApp = ({ children, mark, active }) => (
  <div className={active ? "relative flex h-10 w-10 items-center justify-center rounded border border-[#6b3d41] bg-[#55272c]" : "relative flex h-10 w-10 items-center justify-center"}>
    {children}
    {mark && <span className={active ? "absolute bottom-0 h-[3px] w-4 rounded-full bg-[#dc9fe8]" : "absolute bottom-0 h-[3px] w-[6px] rounded-full bg-[#a39a98]"} />}
  </div>
);

const Taskbar = () => (
  <div className="flex h-[47px] items-center border-t border-[#56464a] bg-[linear-gradient(to_right,#231c2b_0px,#241b2f_400px,#29193b_540px,#301a39_660px,#3d1a2e_770px,#361f24_860px,#35231e_960px,#3a221d_1100px,#45181b_1200px,#4b1217_1290px,#4c1513_1360px,#40170f_1460px,#3a1811_1620px,#351b1a_1780px,#301c20_1919px)] text-white">
    <div className="ml-[661px] grid h-[23px] w-[23px] grid-cols-2 gap-px">
      <span className="bg-[#6fe0fd]" /><span className="bg-[#45c5f9]" /><span className="bg-[#35b2f4]" /><span className="bg-[#1f9bee]" />
    </div>
    <div className="ml-[13px] flex h-8 w-[219px] items-center rounded-full border border-white/15 bg-white/15">
      <Search size={16} className="ml-[10px]" color="#e8e2e4" />
      <span className="ml-[9px] text-[13.2px] text-[#d2c9cc]">Search</span>
    </div>
    <div className="ml-[5px] flex gap-1">
      <TaskbarApp><svg width="24" height="22" viewBox="0 0 24 22"><rect y="6" width="17" height="15" fill="#5f5a5a" /><rect x="5" y="1" width="19" height="15" fill="#f2f0f0" /><rect x="5" y="6" width="12" height="10" fill="#bdb8b8" /></svg></TaskbarApp>
      <TaskbarApp mark><FolderApp /></TaskbarApp>
      <TaskbarApp><EdgeApp /></TaskbarApp>
      <TaskbarApp><StoreApp /></TaskbarApp>
      <TaskbarApp mark><ChromeApp /></TaskbarApp>
      <TaskbarApp mark active><TaskManagerIcon className="h-[19px] w-6" /></TaskbarApp>
      <TaskbarApp mark><NotepadApp /></TaskbarApp>
      <TaskbarApp mark><PythonApp /></TaskbarApp>
    </div>
    <div className="mr-[20px] ml-auto flex items-center">
      <ChevronUp size={16} />
      <div className="relative ml-[16px] flex"><RefreshCw size={17} strokeWidth={1.4} /><span className="absolute right-0 -bottom-px h-2 w-2 rounded-full bg-[#f11]" /></div>
      <Wifi size={17} strokeWidth={1.6} className="ml-[15px]" />
      <Volume2 size={17} strokeWidth={1.5} className="ml-[7px]" />
      <div className="ml-[14px] w-[58px] text-right text-[11.7px] leading-4 tracking-[-0.1px] whitespace-nowrap">12:37 PM<br />7/27/2025</div>
      <svg width="14" height="17" viewBox="0 0 14 17" className="ml-[8px]" fill="#f0bdf5"><path d="M7 .5 C10 .5 12 2.8 12 6 V9.5 L13.8 13 H.2 L2 9.5 V6 C2 2.8 4 .5 7 .5 Z" /><path d="M4.8 14 H9.2 C9 16.8 5 16.8 4.8 14 Z" /></svg>
    </div>
  </div>
);

export default function App() {
  return (
    <div className="relative h-[1079px] w-[1919px] overflow-hidden bg-[#0b0f19] font-['Open_Sans','Noto_Sans',sans-serif]">
      <TabStrip />
      <Toolbar />
      <Bookmarks />
      <WebUI />
      <Taskbar />
      <TaskManager />
    </div>
  );
}
